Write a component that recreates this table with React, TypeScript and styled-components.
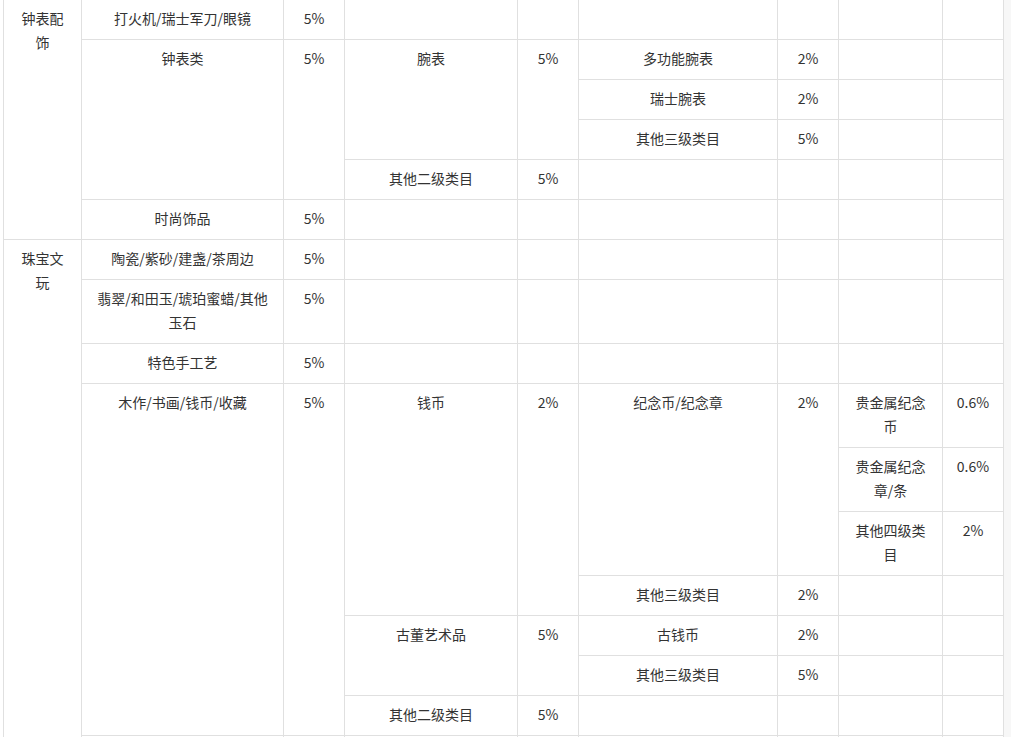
import styled, { createGlobalStyle } from "styled-components"

const GlobalStyle = createGlobalStyle`
	* {
		box-sizing: border-box;
	}
	html,
	body {
		margin: 0;
		padding: 0;
		background: #fff;
		overflow: hidden;
	}
`

const Page = styled.div`
	display: flex;
	width: 1011px;
	height: 737px;
	padding-left: 3px;
	overflow: hidden;
	font-family: "Noto Sans CJK SC", "Noto Sans", sans-serif;
	font-size: 14px;
	color: #333;
`

const Edge = styled.div`
	flex: 1;
	background: #f7f7f7;
`

const Table = styled.table`
	flex: none;
	width: 1001px;
	table-layout: fixed;
	border-collapse: separate;
	border-spacing: 0;
	border-left: 1px solid #e0e0e0;
	border-right: 0;
`

const Cell = styled.td`
	padding: 6px 12px 9px;
	line-height: 24px;
	text-align: center;
	vertical-align: top;
	border-right: 1px solid #e0e0e0;
	border-bottom: 1px solid #e0e0e0;
	word-break: break-all;
`

const widths = [78, 202, 61, 173, 61, 199, 61, 104, 61]

type Item = { text?: string; rows?: number }

// each row lists only the cells that start in it
const rows: Item[][] = [
	[{ text: "钟表配饰", rows: 6 }, { text: "打火机/瑞士军刀/眼镜" }, { text: "5%" }, {}, {}, {}, {}, {}, {}],
	[
		{ text: "钟表类", rows: 4 },
		{ text: "5%", rows: 4 },
		{ text: "腕表", rows: 3 },
		{ text: "5%", rows: 3 },
		{ text: "多功能腕表" },
		{ text: "2%" },
		{},
		{}
	],
	[{ text: "瑞士腕表" }, { text: "2%" }, {}, {}],
	[{ text: "其他三级类目" }, { text: "5%" }, {}, {}],
	[{ text: "其他二级类目" }, { text: "5%" }, {}, {}, {}, {}],
	[{ text: "时尚饰品" }, { text: "5%" }, {}, {}, {}, {}, {}, {}],
	[{ text: "珠宝文玩", rows: 11 }, { text: "陶瓷/紫砂/建盏/茶周边" }, { text: "5%" }, {}, {}, {}, {}, {}, {}],
	[{ text: "翡翠/和田玉/琥珀蜜蜡/其他玉石" }, { text: "5%" }, {}, {}, {}, {}, {}, {}],
	[{ text: "特色手工艺" }, { text: "5%" }, {}, {}, {}, {}, {}, {}],
	[
		{ text: "木作/书画/钱币/收藏", rows: 7 },
		{ text: "5%", rows: 7 },
		{ text: "钱币", rows: 4 },
		{ text: "2%", rows: 4 },
		{ text: "纪念币/纪念章", rows: 3 },
		{ text: "2%", rows: 3 },
		{ text: "贵金属纪念币" },
		{ text: "0.6%" }
	],
	[{ text: "贵金属纪念章/条" }, { text: "0.6%" }],
	[{ text: "其他四级类目" }, { text: "2%" }],
	[{ text: "其他三级类目" }, { text: "2%" }, {}, {}],
	[{ text: "古董艺术品", rows: 2 }, { text: "5%", rows: 2 }, { text: "古钱币" }, { text: "2%" }, {}, {}],
	[{ text: "其他三级类目" }, { text: "5%" }, {}, {}],
	[{ text: "其他二级类目" }, { text: "5%" }, {}, {}, {}, {}],
	[{}, {}, {}, {}, {}, {}, {}, {}]
]

export default function App() {
	return (
		<>
			<GlobalStyle />
			<Page>
				<Table>
					<colgroup>
						{widths.map((w, i) => (
							<col key={i} style={{ width: w }} />
						))}
					</colgroup>
					<tbody>
						{rows.map((row, r) => (
							<tr key={r}>
								{row.map((cell, c) => (
									<Cell key={c} rowSpan={cell.rows}>
										{cell.text}
									</Cell>
								))}
							</tr>
						))}
					</tbody>
				</Table>
				<Edge />
			</Page>
		</>
	)
}
